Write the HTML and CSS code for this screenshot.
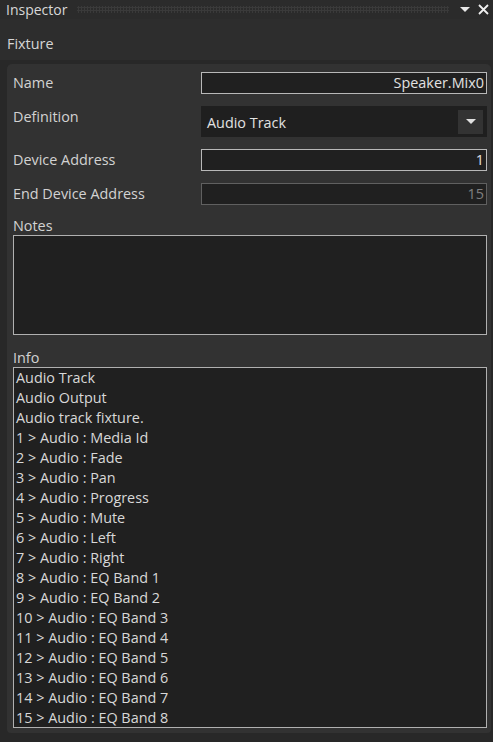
FILE: index.html
```html
<!DOCTYPE html>
<html>
<head>
<meta charset="utf-8">
<link rel="stylesheet" href="styles.css">
</head>
<body>
<div class="window">
  <div class="titlebar">
    <span class="title">Inspector</span>
    <span class="grip"></span>
    <svg class="tb-menu" width="10" height="6" viewBox="0 0 10 6"><polygon points="0,0 10,0 5,5" fill="#e8e8e8"/></svg>
    <svg class="tb-close" width="11" height="11" viewBox="0 0 11 11"><path d="M1 1 L10 10 M10 1 L1 10" stroke="#f0f0f0" stroke-width="1.8"/></svg>
  </div>
  <div class="section-header">Fixture</div>
  <div class="panel">
    <div class="row">
      <div class="label">Name</div>
      <div class="input">Speaker.Mix0</div>
    </div>
    <div class="row">
      <div class="label">Definition</div>
      <div class="combo">
        <span class="combo-text">Audio Track</span>
        <span class="combo-btn"><svg width="10" height="6" viewBox="0 0 10 6"><polygon points="0,0 10,0 5,5" fill="#e0e0e0"/></svg></span>
      </div>
    </div>
    <div class="row">
      <div class="label">Device Address</div>
      <div class="input">1</div>
    </div>
    <div class="row">
      <div class="label">End Device Address</div>
      <div class="input disabled">15</div>
    </div>
    <div class="block-label notes-label">Notes</div>
    <div class="notes"></div>
    <div class="block-label info-label">Info</div>
    <div class="info">
      <div>Audio Track</div>
      <div>Audio Output</div>
      <div>Audio track fixture.</div>
      <div>1 &gt; Audio : Media Id</div>
      <div>2 &gt; Audio : Fade</div>
      <div>3 &gt; Audio : Pan</div>
      <div>4 &gt; Audio : Progress</div>
      <div>5 &gt; Audio : Mute</div>
      <div>6 &gt; Audio : Left</div>
      <div>7 &gt; Audio : Right</div>
      <div>8 &gt; Audio : EQ Band 1</div>
      <div>9 &gt; Audio : EQ Band 2</div>
      <div>10 &gt; Audio : EQ Band 3</div>
      <div>11 &gt; Audio : EQ Band 4</div>
      <div>12 &gt; Audio : EQ Band 5</div>
      <div>13 &gt; Audio : EQ Band 6</div>
      <div>14 &gt; Audio : EQ Band 7</div>
      <div>15 &gt; Audio : EQ Band 8</div>
    </div>
  </div>
</div>
</body>
</html>
```
FILE: styles.css
```css
html, body {
  margin: 0;
  padding: 0;
  background: #282828;
}
body {
  font-family: "Open Sans", "Noto Sans", sans-serif;
  font-size: 14.4px;
  color: #d2d2d2;
  width: 493px;
  height: 742px;
  overflow: hidden;
}
.window {
  display: flex;
  flex-direction: column;
  height: 742px;
}
.titlebar {
  height: 19px;
  background: #2b2b2b;
  display: flex;
  align-items: center;
  padding-left: 6px;
}
.title {
  font-size: 14px;
  color: #d8d8d8;
  line-height: 19px;
}
.grip {
  flex: 1;
  height: 7px;
  margin: 0 11px 0 10px;
  background-image: radial-gradient(circle at 1.5px 1.5px, #3a3a3a 1px, transparent 1.3px);
  background-size: 3px 3px;
}
.tb-menu {
  margin-right: 8px;
}
.tb-close {
  margin-right: 4px;
}
.section-header {
  height: 41px;
  background: #2d2d2d;
  padding-left: 7px;
  padding-top: 6px;
  box-sizing: border-box;
  color: #d6d6d6;
  line-height: 38px;
  margin-bottom: 4px;
}
.panel {
  margin: 0 2px 0 7px;
  background: #323232;
  border-radius: 5px 5px 4px 4px;
  padding: 8px 4px 4px 6px;
  height: 669px;
  box-sizing: border-box;
}
.row {
  display: flex;
  align-items: flex-start;
  margin-bottom: 12px;
}
.label {
  width: 188px;
  height: 22px;
  line-height: 22px;
  flex: none;
}
.input {
  flex: 1;
  height: 22px;
  box-sizing: border-box;
  border: 1px solid #b8b8b8;
  background: #202020;
  color: #e2e2e2;
  text-align: right;
  line-height: 20px;
  padding-right: 2px;
}
.input.disabled {
  border-color: #606060;
  color: #808080;
}
.combo {
  flex: 1;
  height: 31px;
  background: #1f1f1f;
  display: flex;
  align-items: center;
  padding: 0 4px 0 6px;
}
.combo-text {
  flex: 1;
  color: #e2e2e2;
  padding-top: 2px;
}
.combo-btn {
  width: 25px;
  height: 24px;
  background: #333333;
  display: flex;
  align-items: center;
  justify-content: center;
}
.block-label {
  height: 18px;
  line-height: 18px;
}
.notes-label {
  margin-top: 2px;
}
.notes {
  height: 100px;
  box-sizing: border-box;
  border: 1px solid #b0b0b0;
  background: #202020;
}
.info-label {
  margin-top: 14px;
}
.info {
  height: 361px;
  box-sizing: border-box;
  border: 1px solid #b0b0b0;
  background: #202020;
  padding-left: 2px;
  line-height: 20px;
  overflow: hidden;
  color: #d8d8d8;
}
```
